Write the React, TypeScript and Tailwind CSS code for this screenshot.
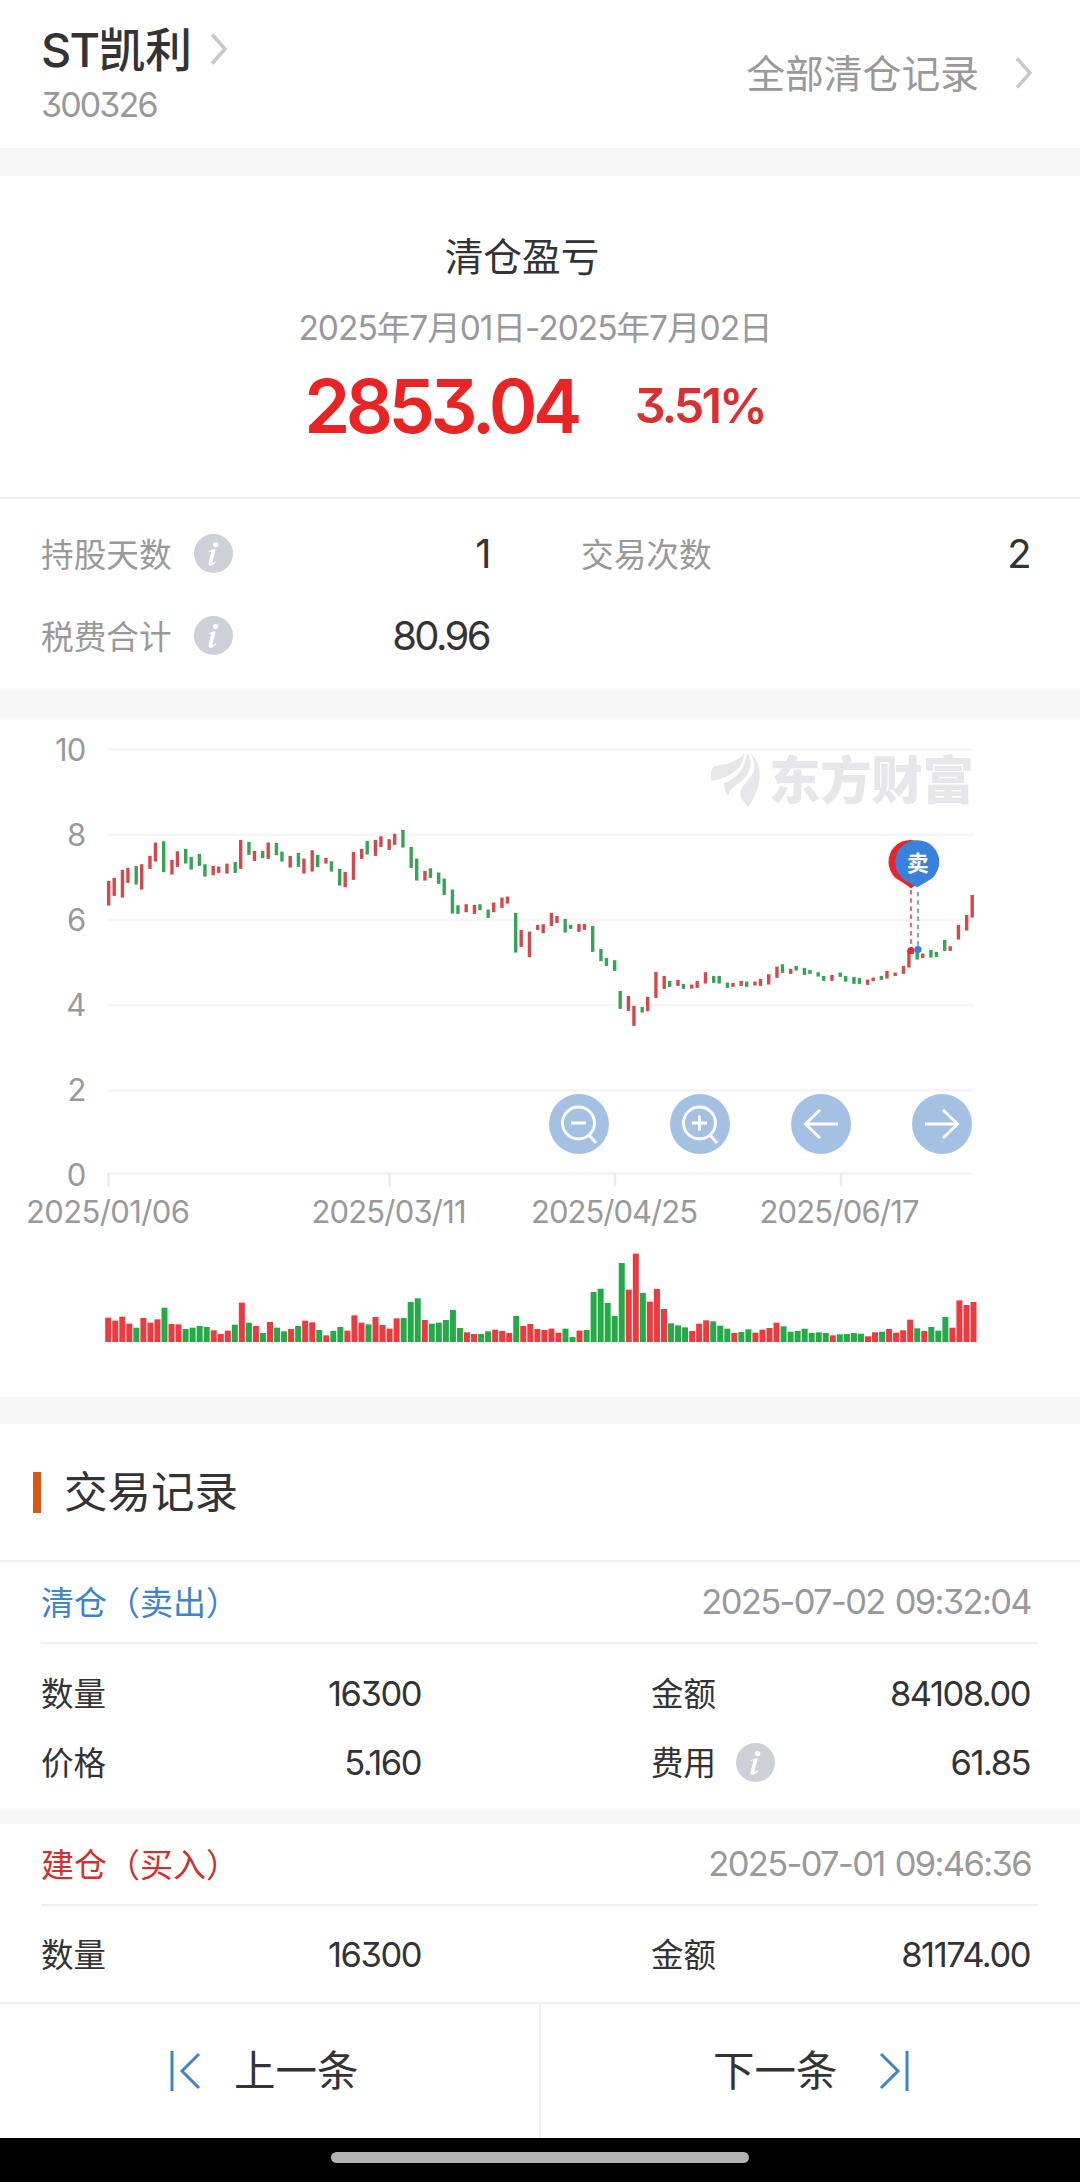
import React from "react";

// colour, top and bottom of every session's candle, in thirds of a pixel from the chart's top
const CANDLES: [string, number, number][] = [
  ["r", 489, 563], ["r", 480, 534], ["r", 456, 539], ["r", 450, 495], ["g", 444, 500], ["r", 439, 515], ["r", 414, 453], ["r", 374, 431],
  ["g", 370, 463], ["r", 426, 470], ["r", 400, 447], ["g", 393, 437], ["g", 417, 455], ["g", 408, 444], ["g", 439, 476], ["r", 444, 472],
  ["r", 446, 465], ["r", 437, 467], ["g", 432, 465], ["r", 366, 453], ["g", 372, 411], ["r", 399, 429], ["g", 399, 421], ["r", 374, 423],
  ["g", 375, 412], ["g", 401, 431], ["r", 414, 449], ["g", 405, 447], ["r", 422, 467], ["r", 397, 461], ["g", 411, 448], ["r", 420, 437],
  ["g", 430, 461], ["g", 453, 503], ["r", 462, 508], ["r", 402, 486], ["r", 393, 423], ["g", 369, 410], ["r", 366, 414], ["r", 355, 387],
  ["r", 364, 396], ["r", 348, 381], ["g", 336, 389], ["g", 387, 450], ["g", 422, 488], ["r", 459, 488], ["g", 451, 480], ["g", 464, 498],
  ["g", 482, 531], ["g", 515, 587], ["g", 562, 588], ["r", 559, 583], ["r", 561, 588], ["g", 559, 577], ["g", 575, 600], ["r", 554, 583],
  ["r", 539, 570], ["r", 536, 557], ["g", 585, 704], ["r", 636, 687], ["r", 641, 718], ["r", 621, 636], ["r", 619, 646], ["r", 585, 624],
  ["r", 594, 615], ["g", 603, 644], ["g", 621, 633], ["r", 618, 642], ["r", 618, 636], ["g", 624, 702], ["g", 693, 730], ["g", 720, 744],
  ["g", 727, 759], ["g", 819, 873], ["r", 834, 879], ["r", 864, 924], ["g", 867, 884], ["r", 837, 880], ["r", 762, 840], ["r", 774, 813],
  ["g", 789, 807], ["r", 786, 804], ["g", 798, 813], ["r", 800, 812], ["r", 789, 810], ["r", 763, 797], ["g", 774, 795], ["g", 774, 797],
  ["g", 794, 810], ["r", 795, 807], ["r", 789, 804], ["g", 791, 807], ["r", 791, 803], ["r", 783, 804], ["r", 769, 800], ["r", 746, 780],
  ["g", 739, 765], ["r", 753, 768], ["g", 744, 758], ["g", 750, 771], ["g", 756, 768], ["g", 763, 776], ["g", 774, 789], ["r", 771, 789],
  ["g", 764, 777], ["g", 774, 791], ["g", 777, 798], ["g", 780, 798], ["r", 785, 801], ["r", 779, 790], ["g", 774, 786], ["r", 759, 782],
  ["r", 764, 774], ["r", 744, 768], ["r", 696, 749], ["g", 696, 725], ["r", 707, 720], ["g", 696, 719], ["g", 702, 717], ["g", 666, 699],
  ["r", 685, 699], ["r", 621, 665], ["r", 591, 638], ["r", 531, 599],
];

// top of every volume bar, in thirds of a pixel above a baseline at 306
const VOLUMES = [
  233, 242, 230, 251, 263, 234, 248, 238, 203, 252, 253, 267, 263, 258, 261, 271, 282, 272, 254, 188, 248, 258, 279, 246, 263, 274, 267, 258,
  242, 247, 270, 286, 273, 261, 272, 226, 248, 253, 231, 255, 266, 235, 234, 186, 175, 240, 251, 248, 240, 210, 264, 277, 282, 282, 274, 269,
  273, 279, 228, 258, 252, 267, 270, 266, 278, 266, 291, 272, 270, 156, 146, 189, 228, 69, 149, 41, 159, 185, 147, 207, 250, 256, 262, 273,
  251, 241, 244, 257, 266, 279, 276, 268, 278, 269, 264, 248, 259, 275, 273, 266, 279, 277, 279, 286, 283, 282, 279, 281, 289, 277, 275, 267,
  278, 271, 239, 265, 273, 261, 272, 231, 263, 181, 195, 186,
];
const GREEN_VOLUME = new Set([68, 81, 90, 97]);

const STEP = 7.035;
const FONT = "font-[Inter,'Noto_Sans_CJK_SC',sans-serif] [font-feature-settings:'cv09']";

function Chevron({ className = "" }: { className?: string }) {
  return (
    <svg width="18" height="34" viewBox="0 0 18 34" fill="none" className={className}>
      <path d="M2 2.5L15 17L2 31.5" stroke="#c8c8c8" strokeWidth="3.5" />
    </svg>
  );
}

function Info({ className }: { className: string }) {
  return (
    <span className={`flex size-[39px] shrink-0 items-center justify-center rounded-full bg-[#cdd0d7] ${className}`}>
      <svg width="39" height="39" viewBox="0 0 39 39" fill="#fff">
        <circle cx="21.6" cy="10.6" r="2.7" />
        <path d="M14.6 17.4C16.8 15.8 19 15.2 21.7 15.2L18.6 28C18.4 29 19.2 29.2 21.8 27.2L22.3 27.9C20.2 30.3 18.2 31.8 16.4 31.8C14.6 31.8 14.2 30.5 14.6 28.8L17.2 18.3C17.4 17.3 16.5 17.3 14.9 18.2Z" />
      </svg>
    </span>
  );
}

function Gap({ className }: { className: string }) {
  return <div className={`w-full shrink-0 bg-[#f7f7f7] ${className}`} />;
}

function Stat({ label, value, info }: { label: string; value: string; info?: boolean }) {
  return (
    <div className="flex h-[82px] items-center">
      <span className="pt-[2px] text-[32.7px] text-[#999]">{label}</span>
      {info && <Info className="ml-[22px] -mt-[1px]" />}
      <span className="ml-auto text-[40px] tracking-[-0.065em]">{value}</span>
    </div>
  );
}

function Field({ label, value, info }: { label: string; value: string; info?: boolean }) {
  return (
    <div className="flex h-[69px] items-center">
      <span className="pt-[2px] text-[32.5px]">{label}</span>
      {info && <Info className="ml-[20px] -mt-[2px]" />}
      <span className="ml-auto text-[34.5px] tracking-[-0.043em]">{value}</span>
    </div>
  );
}

function RecordHead({ title, time, color }: { title: string; time: string; color: string }) {
  return (
    <div className="ml-[41px] mr-[42px] flex h-[82px] items-center justify-between border-b-2 border-[#f0f0f0] pr-[7px]">
      <span className={`pt-[2px] text-[33px] ${color}`}>{title}</span>
      <span className="text-[34.5px] tracking-[-0.048em] [word-spacing:2px] text-[#999]">{time}</span>
    </div>
  );
}

function Chart() {
  const grid = [31.5, 116.7, 202, 287.2, 372.4, 455.5];
  const dates: [number, string, number][] = [
    [108, "2025/01/06", 164], [389, "2025/03/11", 155], [614.5, "2025/04/25", 167], [839.5, "2025/06/17", 160],
  ];
  return (
    <svg width="1080" height="679" viewBox="0 0 1080 679" className="block">
      {grid.map((y) => (
        <path key={y} d={`M107 ${y}H974`} stroke="#f5f5f5" strokeWidth="2.6" />
      ))}
      {[108.5, 389.5, 615, 841].map((x) => (
        <path key={x} d={`M${x} 455V469`} stroke="#ececec" strokeWidth="2.5" />
      ))}
      <g fill="#999" fontSize="31" textAnchor="end" letterSpacing="-0.8">
        {["10", "8", "6", "4", "2", "0"].map((t, i) => (
          <text key={t} x="85.5" y={42.8 + i * 85}>{t}</text>
        ))}
      </g>
      <g fill="#999" fontSize="31" textAnchor="middle">
        {dates.map(([x, t, w]) => (
          <text key={t} x={x} y="505" textLength={w}>{t}</text>
        ))}
      </g>

      <g fill="#e6e6eb">
        <path d="M711.5 63C710.5 55 711 50 714 48.5C726 46 738 44 744 35C744 47 736 58 711.5 63Z" />
        <path d="M728 78C725 73 723.5 69 724 65C738 60 745.5 50 746.5 35C751 40 752 47 748.5 54C743 66 731 67 728 78Z" />
        <path d="M750.5 35C757 41 760 49 759.7 58C759 70 754 81 748 89C744 84 740 79 740 76C740 68 750 63 753.5 54C756 47 753 40 750.5 35Z" />
        <text x="769" y="81" fontSize="51.5" fontWeight="900" textLength="205">东方财富</text>
      </g>

      {CANDLES.map(([c, top, bottom], i) => (
        <rect
          key={i}
          x={107 + 2.75 * Math.floor((i * STEP) / 2.75)}
          y={top / 3 - 0.1}
          width="3.4"
          height={(bottom - top) / 3}
          fill={c === "r" ? "#d4494b" : "#35a555"}
        />
      ))}

      {VOLUMES.map((top, i) => (
        <rect
          key={i}
          x={105.2 + i * STEP}
          y={522 + top / 3}
          width="6"
          height={(306 - top) / 3}
          fill={CANDLES[i][0] === "g" || GREEN_VOLUME.has(i) ? "#24aa47" : "#ee3a3e"}
        />
      ))}

      <path d="M911 172V229" stroke="#d97575" strokeWidth="2.2" strokeDasharray="4.5 3.7" />
      <path d="M918 174V229" stroke="#85a9c0" strokeWidth="2.2" strokeDasharray="4.5 3.7" />
      <circle cx="911" cy="232.7" r="3.6" fill="#dc2e33" />
      <circle cx="918" cy="231.5" r="3.6" fill="#3b7fd9" />
      <path d="M911 170.500C906 166 900 163.500 895 159.500A22 22 0 1 1 926 159.500C922 163.500 916 166 911 170.500Z" fill="#e8262a" />
      <path d="M917 169.500C912 166 906 163.500 901.500 159.500A22 22 0 1 1 933 159.500C928 163.500 922 166 917 169.500Z" fill="#3882dd" />
      <text x="917.8" y="152.5" fontSize="22" fontWeight="700" fill="#fff" textAnchor="middle">卖</text>
    </svg>
  );
}

const BUTTONS = [
  <><circle cx="29.5" cy="29" r="16" /><path d="M39.5 40.5L47 49M22 29H37" /></>,
  <><circle cx="29.5" cy="29" r="16" /><path d="M39.5 40.5L47 49M22 29H37M29.5 21.5V36.5" /></>,
  <path d="M47 30H14.5M29 16L14.5 30L29 44" />,
  <path d="M13 30H45.5M31 16L45.5 30L31 44" />,
];

export default function App() {
  return (
    <div className={`flex h-[2182px] w-[1080px] flex-col overflow-hidden bg-white leading-none text-[#333] ${FONT}`}>
      <header className="flex h-[148px] shrink-0 justify-between pl-[41px] pr-[47px]">
        <div className="pt-[24px]">
          <div className="flex h-[52px] items-center">
            <span className="text-[46.8px] font-medium"><span className="tracking-[-0.035em]">ST</span>凯利</span>
            <Chevron className="ml-[18px] -mt-[3px]" />
          </div>
          <div className="mt-[12px] text-[34px] tracking-[-0.055em] text-[#999]">300326</div>
        </div>
        <div className="flex items-center text-[38.8px] text-[#999]">
          <span>全部清仓记录</span>
          <Chevron className="ml-[36px] -mt-[2px]" />
        </div>
      </header>
      <Gap className="h-7" />

      <section className="flex h-[321px] shrink-0 flex-col items-center">
        <div className="mt-[61px] h-10 text-[38.7px] leading-10 -ml-[36px]">清仓盈亏</div>
        <div className="mt-[31px] h-10 whitespace-nowrap text-[33.5px] leading-10 tracking-[-0.030em] text-[#999] -ml-[10px]">2025年7月01日-2025年7月02日</div>
        <div className="mt-[18px] flex h-[80px] items-center gap-[57px] -ml-[11px]">
          <span className="text-[74px] font-semibold tracking-[-0.061em] text-[#e92424]">2853.04</span>
          <span className="text-[48.5px] font-semibold tracking-[-0.060em] text-[#dc2f2f]">3.51%</span>
        </div>
      </section>

      <section className="grid h-[193px] shrink-0 grid-cols-[448px_448px] content-start gap-x-[92px] border-t-2 border-[#f0f0f0] pl-[41px] pt-[14px]">
        <Stat label="持股天数" value="1" info />
        <Stat label="交易次数" value="2" />
        <Stat label="税费合计" value="80.96" info />
      </section>
      <Gap className="h-7" />

      <section className="relative h-[679px] shrink-0">
        <Chart />
        <div className="absolute left-[549px] top-[376px] flex gap-[61px]">
          {BUTTONS.map((icon, i) => (
            <button key={i} className="size-[60px] rounded-full bg-[#a4c1e4]">
              <svg width="60" height="60" viewBox="0 0 60 60" fill="none" stroke="#fff" strokeWidth="2.9">{icon}</svg>
            </button>
          ))}
        </div>
      </section>
      <Gap className="h-[27px]" />

      <section className="flex h-[138px] shrink-0 items-center border-b-2 border-[#f0f0f0] pl-[33px]">
        <span className="h-[41px] w-2 bg-[#d9570f]" />
        <h2 className="ml-[23px] pt-[2px] text-[43.5px]">交易记录</h2>
      </section>

      <section className="h-[248px] shrink-0">
        <RecordHead title="清仓（卖出）" time="2025-07-02 09:32:04" color="text-[#3f83c8]" />
        <div className="ml-[41px] mt-[16px] grid grid-cols-[380px_379px] gap-x-[230px]">
          <Field label="数量" value="16300" />
          <Field label="金额" value="84108.00" />
          <Field label="价格" value="5.160" />
          <Field label="费用" value="61.85" info />
        </div>
      </section>
      <Gap className="h-[14px]" />

      <section className="h-[178px] shrink-0">
        <RecordHead title="建仓（买入）" time="2025-07-01 09:46:36" color="text-[#cb3230]" />
        <div className="ml-[41px] mt-[15px] grid grid-cols-[380px_379px] gap-x-[230px]">
          <Field label="数量" value="16300" />
          <Field label="金额" value="81174.00" />
        </div>
      </section>

      <nav className="flex h-[136px] shrink-0 border-t-2 border-[#f0f0f0] text-[41.5px]">
        <button className="flex w-[541px] items-center border-r-2 border-[#f0f0f0] pl-[169px]">
          <svg width="32" height="40" viewBox="0 0 32 40" fill="none" stroke="#3f83c8" strokeWidth="3">
            <path d="M3 0V40M30 3L13 20L30 37" />
          </svg>
          <span className="ml-[33px] pt-[2px]">上一条</span>
        </button>
        <button className="flex flex-1 items-center pl-[172px]">
          <span className="pt-[2px]">下一条</span>
          <svg width="32" height="40" viewBox="0 0 32 40" fill="none" stroke="#3f83c8" strokeWidth="3" className="ml-[40px]">
            <path d="M29 0V40M3 3L20 20L3 37" />
          </svg>
        </button>
      </nav>

      <footer className="flex h-[44px] shrink-0 justify-center bg-black pt-[14px]">
        <div className="h-[11px] w-[418px] rounded-full bg-[#b2b2b2]" />
      </footer>
    </div>
  );
}
